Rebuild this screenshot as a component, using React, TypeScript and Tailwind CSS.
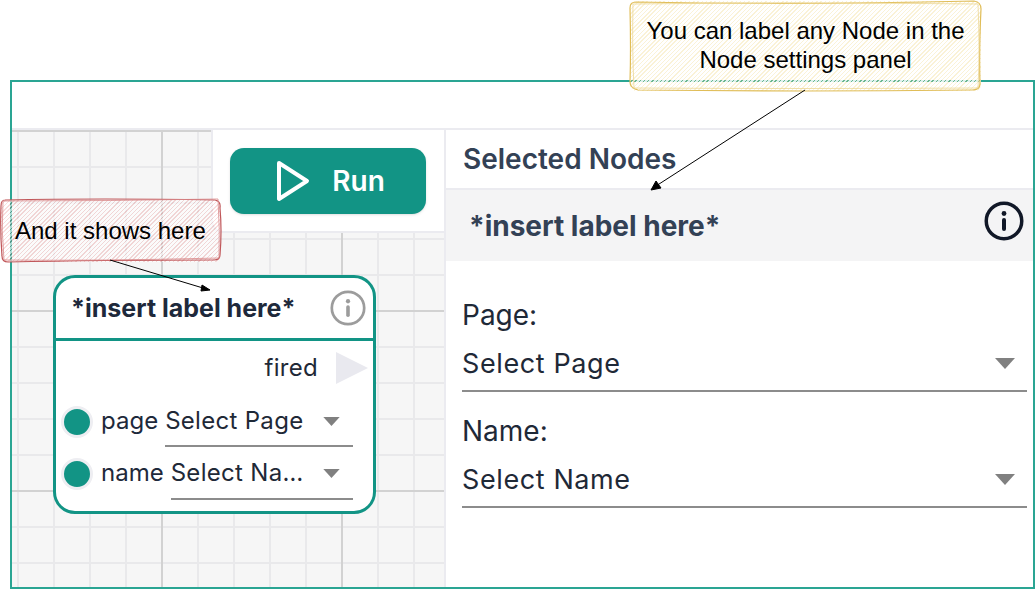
function InfoIcon({ size, stroke, color, className }: { size: number; stroke: number; color: string; className?: string }) {
  return (
    <svg className={className} width={size} height={size} viewBox="0 0 40 40" fill="none">
      <circle cx="20" cy="20" r={20 - stroke / 2 - 0.5} stroke={color} strokeWidth={stroke} />
      <line x1="20" y1="19" x2="20" y2="28" stroke={color} strokeWidth="4" strokeLinecap="round" />
      <circle cx="20" cy="12.5" r="2.4" fill={color} />
    </svg>
  )
}

function Caret({ className }: { className: string }) {
  return (
    <svg className={className} viewBox="0 0 20 11">
      <path d="M0 0 H20 L10 11 Z" fill="#808080" />
    </svg>
  )
}

function NodeInput({ label, value, offset, box }: { label: string; value: string; offset: string; box: string }) {
  return (
    <div className="flex h-[52px] items-start">
      <div className="mt-[11px] ml-[5px] h-[32px] w-[32px] shrink-0 rounded-full border-[3px] border-[#eeeef2] bg-[#129485]" />
      <span className="mt-[11px] ml-[8px] text-[24px] leading-[30px] text-[#1e293b]">{label}</span>
      <div className={`${offset} ${box} mr-[20px] flex min-w-0 flex-1 items-start border-b-2 border-[#8c8c8c] pr-[13px]`}>
        <span className="mt-[11px] min-w-0 flex-1 truncate text-[24px] leading-[30px] tracking-[0.3px] text-[#1f2937]">{value}</span>
        <Caret className="mt-[22px] ml-[15px] h-[9px] w-[17px] shrink-0" />
      </div>
    </div>
  )
}

function PanelField({ label, value }: { label: string; value: string }) {
  return (
    <div className="flex h-[116px] flex-col">
      <span className="h-[45px] text-[28px] leading-[34px] text-[#1f2937]">{label}</span>
      <div className="flex h-[49px] items-center border-b-2 border-[#8c8c8c] pb-[6px]">
        <span className="flex-1 text-[27px] leading-[34px] tracking-[0.6px] text-[#1f2937]">{value}</span>
        <Caret className="mr-[12px] h-[11px] w-[20px]" />
      </div>
    </div>
  )
}

export default function App() {
  return (
    <div className="relative h-[589px] w-[1035px] overflow-hidden bg-white font-['Inter',sans-serif]">
      <div className="h-full pt-[80px] pl-[10px]">
        <div className="flex h-full flex-col border-2 border-[#2aa593]">
          <div className="h-[48px] shrink-0 border-b-2 border-[#ebebf0]" />
          <div className="flex flex-1">
            <div className="relative w-[432px] bg-[#f6f6f6] [background-image:linear-gradient(to_right,#d2d2d2_2px,transparent_2px),linear-gradient(to_bottom,#d2d2d2_2px,transparent_2px),linear-gradient(to_right,#e9e9eb_2px,transparent_2px),linear-gradient(to_bottom,#e9e9eb_2px,transparent_2px)] [background-position:149px_0px,0px_0px,5px_0px,0px_0px] [background-size:180px_180px,180px_180px,36px_36px,36px_36px]">
              <div className="absolute top-0 right-0 flex h-[103px] w-[233px] items-center justify-center rounded-bl-xl border-b-2 border-l-2 border-[#ebebf0] bg-white pt-[1px] pr-[2px]">
                <div className="flex h-[66px] w-[196px] items-center justify-center gap-[22px] rounded-[14px] bg-[#129485] pl-[6px] shadow-sm">
                  <svg width="34" height="42" viewBox="0 0 34 42" fill="none">
                    <path d="M3 3 L31 21 L3 39 Z" stroke="white" strokeWidth="4" strokeLinejoin="round" />
                  </svg>
                  <span className="text-[28px] font-semibold text-white">Run</span>
                </div>
              </div>

              <div className="absolute top-[145px] left-[41px] flex h-[239px] w-[323px] flex-col rounded-[22px] border-[3.5px] border-[#129485] bg-white">
                <div className="flex h-[63px] items-center justify-between border-b-[3.5px] border-[#129485] pr-[7px] pl-[15px]">
                  <span className="mt-[1px] text-[25px] font-bold text-[#1e293b]">*insert label here*</span>
                  <InfoIcon size={36} stroke={3} color="#9c9c9c" />
                </div>
                <div className="flex h-[54px] items-center justify-end pr-[5px]">
                  <span className="text-[24px] tracking-[0.3px] text-[#1f2937]">fired</span>
                  <svg className="ml-[18px]" width="32" height="32" viewBox="0 0 32 32">
                    <path d="M0 0 L32 16 L0 32 Z" fill="#e9e9ef" />
                  </svg>
                </div>
                <NodeInput label="page" value="Select Page" offset="ml-[7px]" box="h-[52px]" />
                <NodeInput label="name" value="Select Name" offset="ml-[7px]" box="h-[53px]" />
              </div>
            </div>

            <div className="flex-1 border-l-2 border-[#ebebf0]">
              <div className="flex h-[60px] items-center border-b-2 border-[#ebebf0] px-[17px]">
                <span className="text-[28px] font-semibold text-[#334155]">Selected Nodes</span>
              </div>
              <div className="flex h-[71px] items-center justify-between bg-[#f4f4f5] pr-[9px] pl-[23px]">
                <span className="text-[28px] font-bold text-[#334155]">*insert label here*</span>
                <InfoIcon className="mb-[10px]" size={40} stroke={3.5} color="#111827" />
              </div>
              <div className="pt-[37px] pr-[6px] pl-[16px]">
                <PanelField label="Page:" value="Select Page" />
                <PanelField label="Name:" value="Select Name" />
              </div>
            </div>
          </div>
        </div>
      </div>

      <div className="absolute top-[200px] left-[1px] flex h-[62px] w-[219px] items-center rounded-[5px] bg-[repeating-linear-gradient(135deg,rgba(225,110,110,0.24)_0px,rgba(225,110,110,0.24)_1px,rgba(255,255,255,0.6)_1px,rgba(255,255,255,0.6)_3px)] pl-[14px] font-['Liberation_Sans',sans-serif] text-[24px] text-black">
        And it shows here
      </div>
      <div className="absolute top-[1px] left-[630px] flex h-[90px] w-[351px] flex-col items-center justify-center rounded-[6px] bg-[repeating-linear-gradient(135deg,rgba(240,215,130,0.32)_0px,rgba(240,215,130,0.32)_1px,rgba(255,255,255,0.85)_1px,rgba(255,255,255,0.85)_3px)] pb-[2px] font-['Liberation_Sans',sans-serif] text-[24px] leading-[29px] text-black">
        <span>You can label any Node in the</span>
        <span>Node settings panel</span>
      </div>

      <svg className="pointer-events-none absolute inset-0" width="1035" height="589" viewBox="0 0 1035 589" fill="none">
        <path d="M5 200 Q100 198 215 200 Q221 201 220 208 Q222 230 220 255 Q220 260 214 260 Q100 260 8 262 Q2 262 2 256 Q0 230 1 206 Q1 200 5 200" stroke="#c0575a" strokeWidth="1.2" />
        <path d="M3 201 Q110 201 218 199 Q220 230 219 258 Q100 261 4 260 Q1 230 3 201" stroke="#d98a8c" strokeWidth="0.8" />
        <path d="M636 2 Q800 5 974 1 Q981 2 981 9 Q979 50 980 84 Q980 90 972 90 Q800 92 638 90 Q630 88 630 82 Q631 50 630 8 Q630 2 636 2" stroke="#e0bd58" strokeWidth="1.2" />
        <path d="M633 4 Q800 2 978 4 Q980 50 978 88 Q800 89 634 88 Q632 50 633 4" stroke="#ecd795" strokeWidth="0.8" />
        <path d="M110 260 L203 288" stroke="black" strokeWidth="1" />
        <path d="M210 290 L202 285 L201 291 Z" fill="black" stroke="black" />
        <path d="M805 90 L656 186" stroke="black" strokeWidth="1" />
        <path d="M651 190 L656 181 L661 188 Z" fill="black" stroke="black" />
      </svg>
    </div>
  )
}
